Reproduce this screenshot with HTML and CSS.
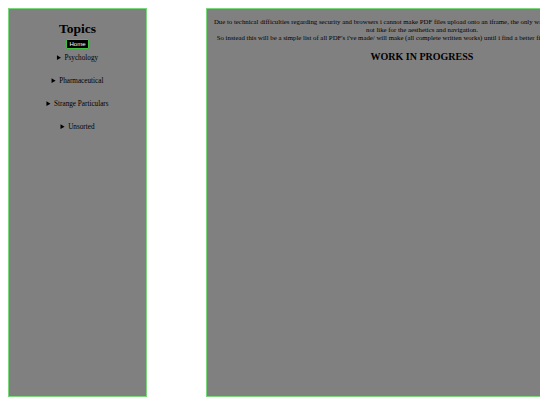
FILE: index.html
```html
<!DOCTYPE html>
<html>
<head>
<meta charset="utf-8">
<link rel="stylesheet" href="styles.css">
</head>
<body>
<div class="page">
  <nav class="sidebar">
    <h1 class="title">Topics</h1>
    <button class="home">Home</button>
    <ul class="topics">
      <li><details><summary>Psychology</summary></details></li>
      <li><details><summary>Pharmaceutical</summary></details></li>
      <li><details><summary>Strange Particulars</summary></details></li>
      <li><details><summary>Unsorted</summary></details></li>
    </ul>
  </nav>
  <main class="content">
    <p class="notice">Due to technical difficulties regarding security and browsers i cannot make PDF files upload onto an iframe, the only way is to just link them, which i do<br>not like for the aesthetics and navigation.<br>So instead this will be a simple list of all PDF's i've made/ will make (all complete written works) until i find a better fix, or a much better way to do it.</p>
    <h2 class="wip">WORK IN PROGRESS</h2>
  </main>
</div>
</body>
</html>
```

FILE: styles.css
```css
html, body {
  margin: 0;
  padding: 0;
  background: #ffffff;
  overflow: hidden;
}
body {
  padding: 8px;
  font-family: "Liberation Serif", "Times New Roman", serif;
  color: #000;
}
.page {
  display: flex;
  gap: 59px;
  height: 389px;
  width: 800px;
}
.sidebar {
  box-sizing: border-box;
  width: 139px;
  height: 389px;
  flex-shrink: 0;
  background: #808080;
  border: 1.5px solid #7cd67c;
  display: flex;
  flex-direction: column;
  align-items: center;
  padding-top: 12px;
}
.title {
  margin: 0;
  font-size: 13.5px;
  line-height: 16px;
  font-weight: bold;
  color: #000;
}
.home {
  margin-top: 2px;
  font-family: "Liberation Sans", Arial, sans-serif;
  font-size: 6px;
  line-height: 6px;
  padding: 1px 2px;
  background: #000;
  color: #fff;
  border: 1px solid #3fc23f;
  border-radius: 1px;
}
.topics {
  list-style: none;
  margin: 5px 0 0 0;
  padding: 0;
  display: flex;
  flex-direction: column;
  align-items: center;
  gap: 15px;
}
.topics li {
  font-size: 7.2px;
  line-height: 8px;
}
.topics summary {
  cursor: pointer;
}
.content {
  box-sizing: border-box;
  width: 432px;
  height: 389px;
  flex-shrink: 0;
  background: #808080;
  border: 1.5px solid #7cd67c;
  padding: 9px 4.5px 0 4.5px;
  text-align: center;
}
.notice {
  margin: 0;
  font-size: 6.8px;
  line-height: 8px;
  white-space: nowrap;
}
.wip {
  margin: 9px 0 0 0;
  font-size: 10px;
  line-height: 12px;
  font-weight: bold;
  color: #000;
}
```
